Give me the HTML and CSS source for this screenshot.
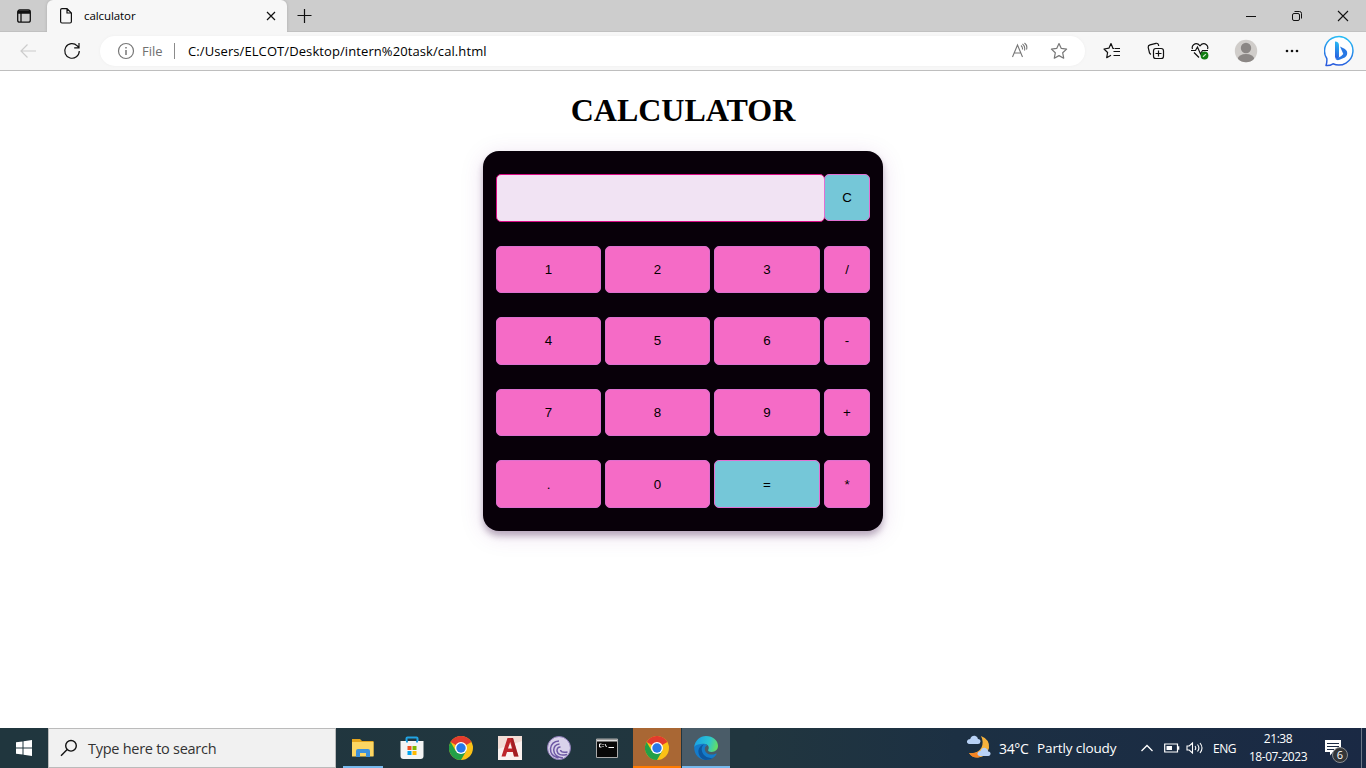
FILE: index.html
```html
<!DOCTYPE html>
<html lang="en">
<head>
<meta charset="utf-8">
<title>calculator</title>
<link rel="stylesheet" href="styles.css">
</head>
<body>
<header class="tabs">
  <div class="tab-actions"><svg width="16" height="16" viewBox="0 0 16 16" fill="none" stroke="#111" stroke-width="1.3"><rect x="1.7" y="2" width="12.6" height="12.2" rx="2"/><path d="M2 3.5h12M2 5h12" stroke-width="1.7"/><path d="M5 5v9"/></svg></div>
  <div class="tab">
    <svg width="14" height="18" viewBox="0 0 14 18" fill="none" stroke="#111" stroke-width="1.2"><path d="M1.6 3Q1.6 1.6 3 1.6h5L12.4 6v8.5q0 1.5-1.4 1.5H3q-1.4 0-1.4-1.5zM8 1.8V6h4.3"/></svg>
    <span class="tab-title">calculator</span>
    <svg class="tab-close" width="10" height="10" viewBox="0 0 10 10" stroke="#111" stroke-width="1.2"><path d="M1 1l8 8M9 1L1 9"/></svg>
  </div>
  <svg class="new-tab" width="16" height="16" viewBox="0 0 16 16" stroke="#111" stroke-width="1.2"><path d="M8.500 1v14M1.500 7.500h14"/></svg>
  <div class="window-buttons">
    <svg width="46" height="32" viewBox="0 0 46 32" stroke="#111"><path d="M18 16.5h10"/></svg>
    <svg width="46" height="32" viewBox="0 0 46 32" fill="none" stroke="#111"><rect x="18.5" y="13.5" width="7" height="7" rx="1.5"/><path d="M20.5 11.5h5q2 0 2 2v5"/></svg>
    <svg width="46" height="32" viewBox="0 0 46 32" stroke="#111" stroke-width="1.1"><path d="M18 11l10 10M28 11L18 21"/></svg>
  </div>
</header>
<div class="toolbar">
  <svg class="back" width="18" height="16" viewBox="0 0 18 16" fill="none" stroke="#ccc" stroke-width="1.2"><path d="M17 8H2M8.500 1.500L2 8l6.500 6.500"/></svg>
  <svg class="reload" width="18" height="18" viewBox="0 0 18 18" fill="none" stroke="#111" stroke-width="1.2"><path d="M16.300 9A7.300 7.300 0 1 1 14.200 3.800L16 5.500M16 1v4.800h-4.800"/></svg>
  <div class="address">
    <svg class="info" width="18" height="18" viewBox="0 0 18 18" fill="none" stroke="#777" stroke-width="1.200"><circle cx="9" cy="9" r="7.500"/><path d="M9 8v5M9 5v1.500" stroke-width="1.500"/></svg>
    <span class="scheme">File</span><span class="rule"></span><span class="url">C:/Users/ELCOT/Desktop/intern%20task/cal.html</span>
    <svg class="aloud" width="18" height="18" viewBox="0 0 18 18" fill="none" stroke="#777" stroke-width="1.100"><path d="M2.500 15L7.500 3l5 12M4.300 11h6.400M11 3.500q1.800 1.500 1.500 4M12.500 1.800q3 2.500 2 6.700M14.500 1q3.300 2.500 2 6.500"/></svg>
    <svg class="star" width="18" height="18" viewBox="0 0 18 18" fill="none" stroke="#777" stroke-width="1.200" stroke-linejoin="round"><path d="M9 1.500l2.300 4.900 5.300.7-3.900 3.700 1 5.400L9 13.600l-4.700 2.600 1-5.400L1.400 7.100l5.300-.7z"/></svg>
  </div>
  <div class="tools">
    <svg width="18" height="18" viewBox="0 0 18 18" fill="none" stroke="#111" stroke-width="1.200" stroke-linejoin="round"><path d="M11 6.500h-1L8 1.500 5.900 6.200l-4.900.8 3.600 3.500-.9 5.200L8 13.300M11.500 6.500H17M10.500 9.500H17M10.500 13.500H17"/></svg>
    <svg width="18" height="18" viewBox="0 0 18 18" fill="none" stroke="#111" stroke-width="1.200"><path d="M3.800 12.500L2.500 11 1.200 5.300Q1 3.300 3 2.800l6-1.500q2-.4 2.500 1.700l.2 1"/><rect x="6.500" y="6.500" width="10" height="10" rx="2.300"/><path d="M11.500 8.500v6M8.500 11.500h6"/></svg>
    <svg width="18" height="18" viewBox="0 0 18 18" fill="none" stroke="#111" stroke-width="1.200"><path d="M1.500 7Q.5 4.500 2.600 2.700q3.400-2.400 6.400 1.100 3-3.500 6.400-1.100Q17.500 4.500 16.500 7M3 10.500l5 5M0 8.500h4.500L6.500 5l3 7 2-3.500H17"/><circle cx="13.500" cy="13.500" r="3.900" fill="#107c10" stroke="none"/><path d="M12 14.800l2.900-2.700" stroke="#cfe8cf"/></svg>
    <svg width="24" height="24" viewBox="0 0 24 24"><defs><clipPath id="face"><circle cx="12" cy="12" r="11.200"/></clipPath></defs><g clip-path="url(#face)"><path fill="#d0cdca" d="M0 0h24v24H0z"/><circle cx="12" cy="9" r="5.200" fill="#8b8785"/><ellipse cx="12" cy="20" rx="8.200" ry="5" fill="#8b8785"/></g></svg>
    <svg width="18" height="18" viewBox="0 0 18 18" fill="#111"><circle cx="4" cy="9" r="1.300"/><circle cx="9" cy="9" r="1.300"/><circle cx="14" cy="9" r="1.300"/></svg>
    <svg class="bing" width="32" height="32" viewBox="0 0 32 32"><defs><linearGradient id="bing" x1=".6" y1="0" x2=".4" y2="1"><stop stop-color="#27bdf5"/><stop offset="1" stop-color="#2a5bdd"/></linearGradient></defs><path d="M2 30.500q1.200-3.500.8-7A14.200 14.200 0 1 1 9 28.800Q6 30.800 2 30.500z" fill="#fff" stroke="url(#bing)" stroke-width="1.500" stroke-linejoin="round"/><path d="M11 6.500q4 0 4 4v11q0 2.500-2 2.500t-2-2.500z" fill="url(#bing)"/><path d="M16 11.500l4.500 2.300q3.500 2 2.500 6-.6 1.700-2.200 2.600l-5.300 2.400q-2.500 1-4-.8l5.500-2.800 2.300-2.200z" fill="#2878e4"/></svg>
  </div>
</div>
<main class="page">
  <h1>CALCULATOR</h1>
  <section class="calculator">
    <input class="display" type="text" readonly aria-label="Result"><button class="key accent clear">C</button>
    <button class="key">1</button><button class="key">2</button><button class="key">3</button><button class="key">/</button>
    <button class="key raised">4</button><button class="key raised">5</button><button class="key raised">6</button><button class="key raised">-</button>
    <button class="key">7</button><button class="key">8</button><button class="key">9</button><button class="key">+</button>
    <button class="key">.</button><button class="key">0</button><button class="key accent">=</button><button class="key">*</button>
  </section>
</main>
<footer class="taskbar">
  <div class="start"><svg width="16" height="16" viewBox="0 0 16 16" fill="#fff"><path d="M0 2.300L6.500 1.400V7.500H0zM7.500 1.200L16 0v7.500H7.500zM0 8.500h6.500v6.100L0 13.700zM7.500 8.500H16V16l-8.500-1.200z"/></svg></div>
  <div class="search"><svg width="18" height="18" viewBox="0 0 18 18" fill="none" stroke="#111" stroke-width="1.400"><circle cx="11" cy="6.800" r="5.300"/><path d="M7.200 10.600L1 16.800"/></svg><span>Type here to search</span></div>
  <div class="apps">
    <div class="app running"><svg width="24" height="24" viewBox="0 0 24 24"><path d="M1 3h8l2 2h11.500v15H1z" fill="#e5a51d"/><path d="M1 6h21.500v14.500H1z" fill="#fcd663"/><path d="M5 21v-6q0-2 2-2h10q2 0 2 2v6h-4v-4H9v4z" fill="#3c91dc"/></svg></div>
    <div class="app"><svg width="24" height="24" viewBox="0 0 24 24"><path d="M6.500 6V2.500q0-1 1-1h9q1 0 1 1V6" fill="none" stroke="#21a4e4" stroke-width="2"/><path d="M.5 5h23v15q0 3-3 3h-17q-3 0-3-3z" fill="#f4f4f4"/><path d="M6 5h2v1.500H6zM16 5h2v1.500h-2z" fill="#21a4e4"/><path d="M7.500 10h4v4h-4z" fill="#f25022"/><path d="M12.500 10h4v4h-4z" fill="#7fba00"/><path d="M7.500 15h4v4h-4z" fill="#00a4ef"/><path d="M12.500 15h4v4h-4z" fill="#ffb900"/></svg></div>
    <div class="app"><svg width="24" height="24" viewBox="0 0 24 24"><g id="chrome"><circle cx="12" cy="12" r="12" fill="#fbc116"/><path d="M12 12L1.600 6A12 12 0 0 1 22.400 6z" fill="#e33b2e"/><path d="M1.600 6A12 12 0 0 0 12 24l5.200-9L12 12 6.800 15z" fill="#23a047"/><circle cx="12" cy="12" r="6" fill="#fff"/><circle cx="12" cy="12" r="4.700" fill="#2878e8"/></g></svg></div>
    <div class="app"><svg width="24" height="24" viewBox="0 0 24 24"><path d="M0 0h24v24H0z" fill="#f2ddd6"/><path d="M0 13L24 5v19H0z" fill="#fff" opacity=".6"/><path d="M3.500 20.500L9.500 2H15l5.500 18.500H16l-1.200-4.500H9l-1.500 4.500zM10 12.500h4L12.200 6z" fill="#bd2429" fill-rule="evenodd"/><path d="M13 2h2l5.500 18.500H16z" fill="#88181e" opacity=".5"/></svg></div>
    <div class="app"><svg width="24" height="24" viewBox="0 0 24 24" fill="none"><circle cx="12" cy="12" r="11.500" fill="#d9d2ea" stroke="#8d7bb8"/><path d="M11.500 22Q3 20 3.500 12.500 4.500 5.500 12 5M16 22Q7 21 6.700 14 7 8.500 12.500 8M20 18.500Q11 20.500 10 15q-.2-4 3.500-4M20.500 16q-6.500 1-7-2" stroke="#6e58a5" stroke-width="1.500"/></svg></div>
    <div class="app"><svg class="terminal" width="24" height="24" viewBox="0 0 24 24"><path d="M1.500 3h21v18.500h-21z" fill="#080808" stroke="#aaa"/><path d="M2 3.500h20v2H2z" fill="#ddd"/><path d="M6.500 8H4.500v3h2M8 8v1m0 1v1M10 8l1.500 3M13.500 11.500H19" stroke="#fff" fill="none"/></svg></div>
    <div class="app attention"><svg width="24" height="24" viewBox="0 0 24 24"><use href="#chrome"/></svg></div>
    <div class="app active"><svg width="24" height="24" viewBox="0 0 24 24"><defs><linearGradient id="edge" x1="0" y1=".3" x2="1" y2=".5"><stop stop-color="#1aa0e5"/><stop offset=".6" stop-color="#2bc4d2"/><stop offset="1" stop-color="#65df62"/></linearGradient></defs><path d="M.2 11C0 18.500 5 24 12 24c4.500 0 8.200-2.200 10.400-5.500.5-.8-.1-1.300-.9-.8-5 2.400-10.700-.2-10.700-4.700 0-1.700.9-3 2.400-3.800C8 5 .8 6.500.2 11z" fill="#147ccb"/><path d="M.2 11C1 4.500 6 0 12 0c7 0 12 4.700 12 9.800 0 4-3 6.200-6.300 6.200-3 0-4-1.300-3.500-2.300 1.700-2.600-.4-6-4.200-6C5.500 7.700 1.500 8.500.2 11z" fill="url(#edge)"/><path d="M10 8.200C6.500 11 7.500 16 10 19q3.500 4.200 9.200 2.700Q16 24 12 24C7 23.500 4 19 4.400 14.500q.6-4.500 5.600-6.300z" fill="#0d579f"/></svg></div>
  </div>
  <div class="tray">
    <svg class="weather" width="26" height="26" viewBox="0 0 26 26"><path d="M15 2q9 3.500 8 12-2 9-11.500 9.500Q6 23.500 3 19q9 1 12.500-5.500Q18 8 15 2z" fill="#f8b33c"/><path d="M3 19q6 1 10-2l1 6q-7 2-11-4z" fill="#f58323"/><path d="M3.500 10q-3-.5-2.500-3 .8-2 3.200-2Q5.500 1.200 9 1.800q2.800.7 3 3.200 2.500 0 2.500 2.500-.3 2.500-2.500 2.500zM14 22q-3-.5-2.500-3 .8-2 3-2 1.500-3.800 5-3 2.800 1 2.700 3.500 2.800.5 2.300 2.700Q24 22 22.500 22z" fill="#b8d2f6"/></svg>
    <span class="temp">34°C</span><span class="sky">Partly cloudy</span>
    <svg class="chevron" width="12" height="8" viewBox="0 0 12 8" fill="none" stroke="#fff" stroke-width="1.300"><path d="M.5 7L6 1.500 11.500 7"/></svg>
    <svg class="battery" width="16" height="10" viewBox="0 0 16 10" fill="none" stroke="#fff" stroke-width="1.200"><path d="M.7 1h12.800v8H.7zM14.700 3.200v3.600"/><path d="M2.500 3h5.500v4H2.500z" fill="#fff" stroke="none"/></svg>
    <svg class="sound" width="18" height="14" viewBox="0 0 18 14" fill="none" stroke="#fff" stroke-width="1.100"><path d="M1 5h2.200L6.500 2v10L3.200 9H1zM9 5q1.500 2 0 4M11.500 3.500q2.800 3.500 0 7M14 2q4 5 0 10"/></svg>
    <span class="lang">ENG</span>
    <div class="clock"><span>21:38</span><span>18-07-2023</span></div>
    <div class="notices"><svg width="18" height="17" viewBox="0 0 18 17"><path d="M1 0h16v12H9l-3 3.500V12H1z" fill="#fff"/><path d="M3 3.500h12M3 6.500h12M3 9.500h7" stroke="#1b2a43"/></svg><span class="count">6</span></div>
    <span class="desktop"></span>
  </div>
</footer>
</body>
</html>
```

FILE: styles.css
```css
* { box-sizing: border-box; }
body { margin: 0; width: 1366px; height: 768px; overflow: hidden; display: flex; flex-direction: column; background: #fff; font-family: "Open Sans", "Noto Sans", sans-serif; }
svg { display: block; flex: none; }
span { white-space: nowrap; }

.tabs { flex: none; height: 32px; display: flex; align-items: center; background: #cdcdcd; box-shadow: inset 0 -1px #c1c1c1; }
.tab-actions { width: 47px; display: flex; justify-content: center; }
.tab { width: 240px; height: 32px; padding: 0 11px 0 12px; display: flex; align-items: center; background: #f7f7f7; border-radius: 6px 6px 0 0; box-shadow: 0 0 3px #aaa; clip-path: inset(0 -4px); }
.tab-title { margin: -2px 0 0 11px; font-size: 11.5px; letter-spacing: -.08px; }
.tab-close { margin-left: auto; }
.new-tab { margin-left: 9px; }
.window-buttons { margin-left: auto; display: flex; }

.toolbar { flex: none; height: 39px; display: flex; align-items: center; background: #f7f7f7; border-bottom: 1px solid #bebebe; }
.back { margin-left: 19px; }
.reload { margin-left: 26px; }
.address { width: 985px; height: 30px; margin-left: 19px; padding: 0 17px; display: flex; align-items: center; border-radius: 15px; background: #fff; box-shadow: 0 0 3px #eee; }
.scheme { width: 22px; margin-left: 7px; font-size: 13px; color: #707070; letter-spacing: 0; }
.rule { width: 1px; height: 16px; margin: 0 13px 0 10px; background: #8b8b8b; }
.url { font-size: 13px; letter-spacing: .09px; }
.aloud { margin-left: auto; }
.star { margin-left: 22px; }
.tools { width: 251px; margin-left: 18px; display: flex; align-items: center; gap: 26px; }
.tools svg:nth-child(4) { margin-left: -1px; }
.tools svg:nth-child(5) { margin-left: -1px; }
.tools .bing { margin-left: -3px; }

.page { flex: 1; display: flex; flex-direction: column; align-items: center; }
.page h1 { margin: 21px 0 22px; font: bold 32px/37px "Liberation Serif", serif; }
.calculator { width: 400px; height: 380px; padding: 23.400px 13px 0; display: grid; grid-template-columns: 105px 105px 106px 46px; grid-template-rows: repeat(5, 47.500px); gap: 24px 4px; background: #080009; border-radius: 16px; box-shadow: 0 5px 6px rgba(54, 18, 64, .3), 0 4px 24px rgba(107, 22, 136, .13); }
.display { grid-column: span 3; width: 329px; height: 47.500px; border: 1px solid #d80a84; border-radius: 5px; background: #f1e3f3; outline: 0; }
.key { padding: 0; border: 1px solid #dc70ce; border-radius: 5px; background: #f56bc6; color: #000; font: 13.333px "Liberation Sans", sans-serif; }
.accent { border-color: #e170d3; background: #75c7d8; }
.clear { height: 46.500px; }
.raised { padding-bottom: 1px; }

.taskbar { flex: none; height: 40px; display: flex; color: #fff; background: linear-gradient(90deg, #20363e, #21363f 55%, #1c3043 70%, #1a2944); }
.start { width: 48px; display: flex; align-items: center; justify-content: center; }
.search { width: 288px; padding-left: 11px; display: flex; align-items: center; gap: 10px; color: #333; background: #f1f1f1; border: 1px solid #bbb; font-size: 14.500px; letter-spacing: -.27px; }
.apps { margin-left: 3px; display: flex; gap: 1px; }
.app { width: 48px; display: flex; align-items: center; justify-content: center; }
.terminal { margin-right: 2px; }
.running { background: linear-gradient(#76b9ed, #76b9ed) 4px 100% / 40px 2px no-repeat; }
.attention { background: #a96734; box-shadow: inset 0 -2px #ff7a00; }
.active { background: #4a5c68; box-shadow: inset 0 -2px #76b9ed; }
.tray { flex: 1; display: flex; align-items: center; padding-left: 236px; font-size: 14px; }
.weather { margin-top: -2px; }
.temp { width: 30px; margin-left: 7px; letter-spacing: -.35px; }
.sky { width: 79px; margin-left: 8px; font-size: 13.500px; letter-spacing: -.12px; }
.chevron { margin-left: 25px; }
.battery { margin-left: 11px; }
.sound { margin-left: 6px; }
.lang { width: 24px; margin-left: 9px; font-size: 12px; letter-spacing: -.5px; }
.clock { width: 60px; margin-left: 11px; display: flex; flex-direction: column; align-items: center; font-size: 12px; line-height: 18px; letter-spacing: -.45px; }
.notices { position: relative; width: 18px; margin-left: 16px; }
.count { position: absolute; left: 8px; top: 7px; width: 16px; height: 16px; border: 1px solid #8b8e92; border-radius: 8px; background: #343638; font-size: 11px; line-height: 14px; text-align: center; }
.desktop { width: 1px; height: 40px; margin-left: auto; margin-right: 4px; background: #6d7787; }
```
